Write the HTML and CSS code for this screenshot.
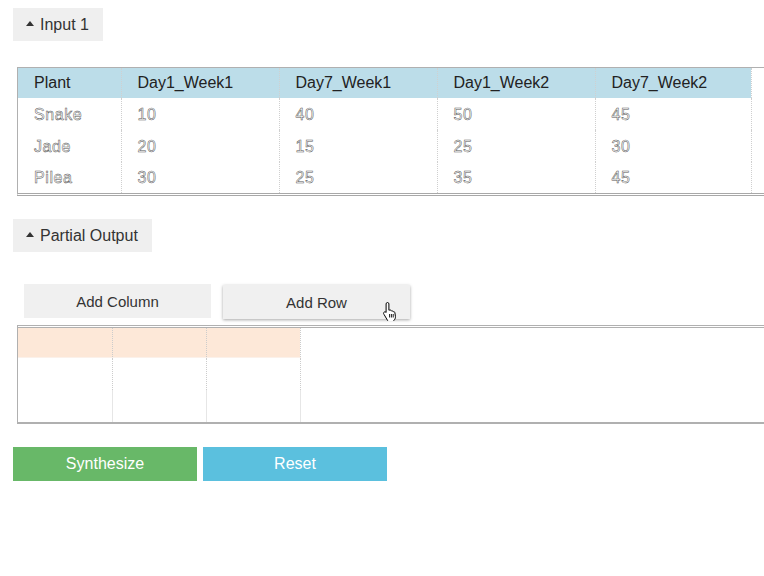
FILE: index.html
```html
<!DOCTYPE html>
<html>
<head>
<meta charset="utf-8">
<link rel="stylesheet" href="styles.css">
</head>
<body>
<div class="page">
  <div class="toggle-row"><button class="toggle"><span class="caret"></span>Input 1</button></div>
  <div class="table-wrap input-wrap">
    <table class="grid">
      <colgroup><col class="c1"><col class="c2"><col class="c2"><col class="c2"><col class="c5"><col></colgroup>
      <thead>
        <tr><th>Plant</th><th>Day1_Week1</th><th>Day7_Week1</th><th>Day1_Week2</th><th>Day7_Week2</th><th class="filler"></th></tr>
      </thead>
      <tbody>
        <tr><td>Snake</td><td>10</td><td>40</td><td>50</td><td>45</td><td class="filler"></td></tr>
        <tr><td>Jade</td><td>20</td><td>15</td><td>25</td><td>30</td><td class="filler"></td></tr>
        <tr class="end"><td>Pilea</td><td>30</td><td>25</td><td>35</td><td>45</td><td class="filler"></td></tr>
      </tbody>
    </table>
  </div>

  <div class="toggle-row second"><button class="toggle"><span class="caret"></span>Partial Output</button></div>

  <div class="actions">
    <button class="act">Add Column</button>
    <button class="act hover">Add Row
      <svg class="cursor" width="16" height="20" viewBox="0 0 16 20">
        <path d="M5.5 1.5c.8 0 1.4.6 1.4 1.4v6.3l.6-.1c.7-.4 1.5 0 1.7.6l.2.3c.6-.4 1.5-.1 1.7.6l.1.2c.7-.3 1.6.1 1.7.9l.5 3.6c.2 1.3-.2 2.6-1 3.5l-.6.7v1H5.6v-1L2 13.4c-.6-.7-.6-1.6 0-2.2.6-.5 1.5-.5 2 .1l.1.2V2.9c0-.8.6-1.4 1.4-1.4z" fill="#fff" stroke="#000" stroke-width="1" stroke-linejoin="round"/>
        <path d="M7.6 13v3.5M9.4 13v3.5M11.2 13v3.5" stroke="#000" stroke-width="0.9"/>
      </svg>
    </button>
  </div>

  <div class="table-wrap output-wrap">
    <table class="grid out">
      <colgroup><col class="o"><col class="o"><col class="o"><col></colgroup>
      <tbody>
        <tr class="orange"><td></td><td></td><td></td><td class="blank"></td></tr>
        <tr><td></td><td></td><td></td><td class="blank"></td></tr>
        <tr class="last"><td></td><td></td><td></td><td class="blank"></td></tr>
      </tbody>
    </table>
  </div>

  <div class="submit">
    <button class="big green">Synthesize</button>
    <button class="big blue">Reset</button>
  </div>
</div>
</body>
</html>
```
FILE: styles.css
```css
html, body {
  margin: 0;
  padding: 0;
  background: #fff;
  overflow: hidden;
}
body {
  font-family: "Liberation Sans", Arial, sans-serif;
  color: #333;
}
.page {
  width: 764px;
  padding-top: 8px;
}
button {
  font-family: "Liberation Sans", Arial, sans-serif;
  border: none;
  cursor: pointer;
}
.toggle-row {
  padding-left: 13px;
  display: flex;
}
.toggle {
  height: 33px;
  background: #efefef;
  color: #333;
  font-size: 16px;
  padding: 0 14px 0 13px;
  display: flex;
  align-items: center;
}
.caret {
  width: 0;
  height: 0;
  border-left: 4px solid transparent;
  border-right: 4px solid transparent;
  border-bottom: 5px solid #333;
  margin-right: 6px;
  position: relative;
  top: -1px;
}
.second {
  margin-top: 23px;
}
.table-wrap {
  margin-left: 17px;
  width: 760px;
  border-left: 1px solid #b0b0b0;
  border-top: 1px solid #b0b0b0;
  border-bottom: 3px double #a8a8a8;
}
.input-wrap {
  margin-top: 26px;
}
.grid {
  border-collapse: collapse;
  width: 100%;
  table-layout: fixed;
}
.grid col.c1 { width: 103px; }
.grid col.c2 { width: 158px; }
.grid col.c5 { width: 156px; }
.grid th {
  background: #bcdde9;
  height: 30px;
  padding: 0 0 0 16px;
  text-align: left;
  font-weight: normal;
  font-size: 16px;
  color: #222;
  border-left: 1px dotted #d0d0d0;
}
.grid th:first-child, .grid td:first-child {
  border-left: none;
}
.grid th.filler {
  background: #fff;
}
.grid td {
  height: 31px;
  padding: 1px 0 0 16px;
  font-size: 16px;
  letter-spacing: 0.6px;
  color: #fff;
  -webkit-text-stroke: 0.5px #555;
  border-left: 1px dotted #cfcfcf;
}
.grid tr.end td {
  height: 30px;
}
.actions {
  margin-top: 32px;
  padding-left: 24px;
  display: flex;
  gap: 12px;
}
.act {
  width: 187px;
  height: 34px;
  background: #f0f0f0;
  color: #333;
  font-size: 15px;
  position: relative;
}
.act.hover {
  margin-top: 1px;
  box-shadow: 0 1px 3px rgba(0,0,0,0.35);
}
.cursor {
  position: absolute;
  left: 159px;
  top: 16px;
}
.output-wrap {
  margin-top: 6px;
  border-bottom: 2px solid #b0b0b0;
  border-top: 3px double #b0b0b0;
}
.grid.out col.o { width: 94px; }
.grid.out td {
  height: 32px;
  padding: 0;
  border-left: 1px dotted #cccccc;
  -webkit-text-stroke: 0;
}
.grid.out tr.orange td {
  background: #fde8d8;
  height: 29px;
  border-bottom: 1px solid #fbf1ea;
}
.grid.out tr.orange td.blank {
  background: #fff;
  border-bottom: none;
}
.grid.out tr.last td {
  border-left: 1px solid #e6e6e6;
}
.grid.out tr td:first-child {
  border-left: none;
}
.submit {
  margin-top: 23px;
  padding-left: 13px;
  display: flex;
  gap: 6px;
}
.big {
  width: 184px;
  height: 34px;
  color: #fff;
  font-size: 16px;
}
.green { background: #68b868; }
.blue { background: #5bc0de; }
```
